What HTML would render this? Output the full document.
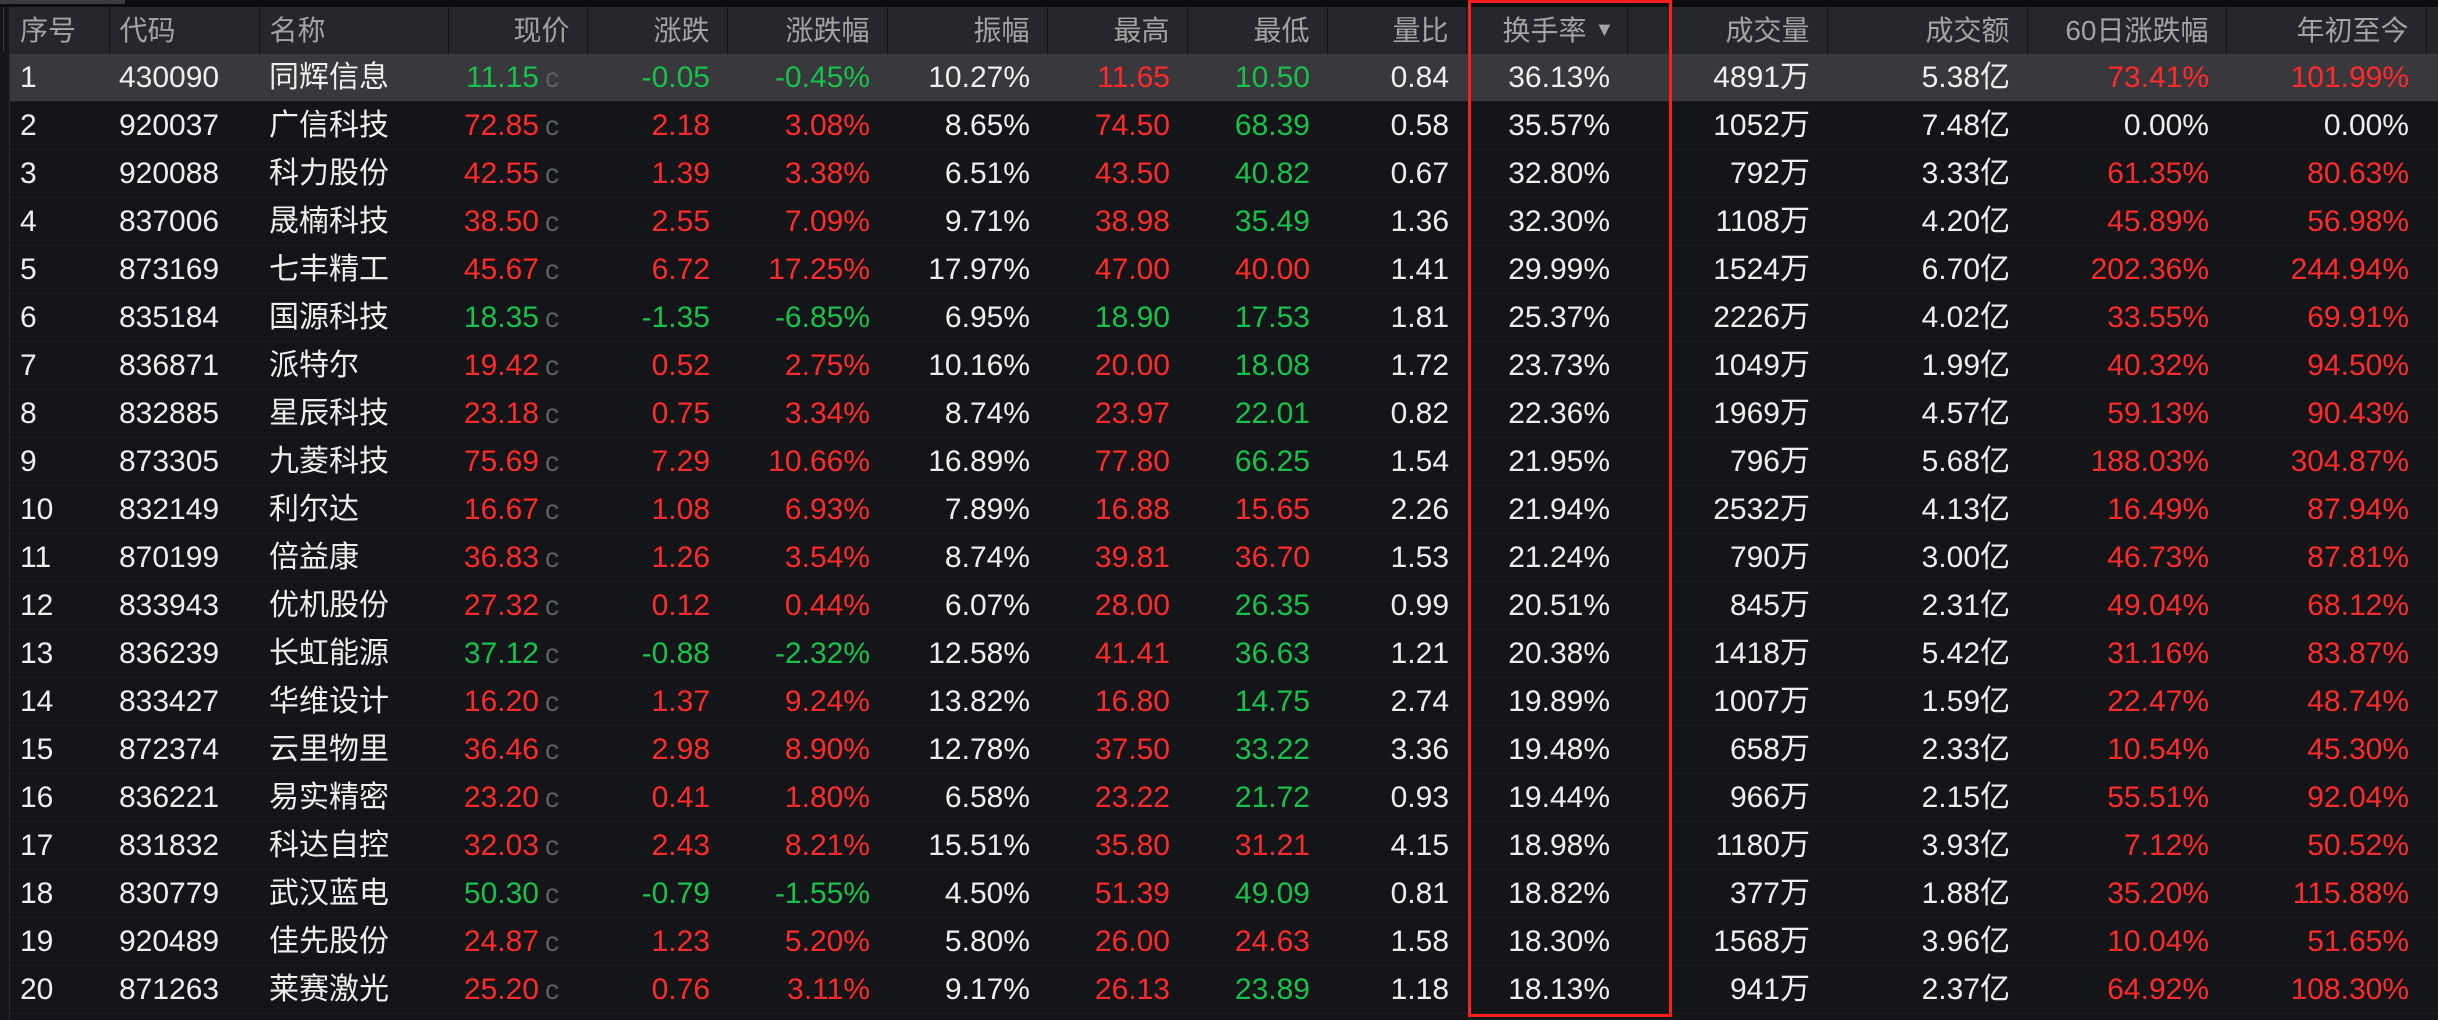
<!DOCTYPE html>
<html><head><meta charset="utf-8">
<style>
html,body{margin:0;padding:0;background:#131519;width:2438px;height:1020px;overflow:hidden;font-family:"Liberation Sans","Noto Sans CJK SC",sans-serif;}
.top{position:absolute;left:0;top:0;width:2438px;height:7px;background:#0c0d10;}
.top2{position:absolute;left:0;top:0;width:125px;height:4px;background:#3a3b40;}
.lstrip{position:absolute;left:0;top:7px;width:10px;height:1013px;background:#15161a;border-right:1px solid #2a2b30;box-sizing:border-box}
.lstrip2{position:absolute;left:3px;top:7px;width:1px;height:45px;background:#3a3b40}
table{position:absolute;left:10px;top:7px;border-collapse:collapse;table-layout:fixed;width:2428px;}
th{height:47px;line-height:30px;background:#26272c;color:#a3a3a3;font-weight:normal;font-size:28px;text-align:right;padding:0 17px 0 0;border-right:1.5px solid #121316;white-space:nowrap;overflow:hidden}
td{height:47px;line-height:30px;border-bottom:1px solid #1c1e23;font-size:30px;color:#eeeeee;text-align:right;padding:0 17px 0 0;white-space:nowrap;overflow:hidden;vertical-align:middle}
th.l,td.l{text-align:left;padding:0 0 0 10px}
tr.hl td{background:#38383d}
.r{color:#ff2a2a}.g{color:#18c24a}
.c{color:#5e5e5e;font-size:28px;margin-left:6px}
td.p{padding-right:28px}
.arr{font-size:20px;vertical-align:4px;margin-left:8px;color:#a3a3a3}
.box{position:absolute;left:1468px;top:0;width:204px;height:1017px;border:3px solid #ff1e1e;box-sizing:border-box}
</style></head><body>
<div class="top"></div><div class="top2"></div><div class="lstrip"></div><div class="lstrip2"></div>
<table>
<colgroup><col style="width:99px"><col style="width:150px"><col style="width:189px"><col style="width:139px"><col style="width:140px"><col style="width:160px"><col style="width:160px"><col style="width:140px"><col style="width:140px"><col style="width:139px"><col style="width:161px"><col style="width:200px"><col style="width:200px"><col style="width:199px"><col style="width:200px"><col style="width:12px"></colgroup>
<tr><th class="l">序号</th><th class="l">代码</th><th class="l">名称</th><th>现价</th><th>涨跌</th><th>涨跌幅</th><th>振幅</th><th>最高</th><th>最低</th><th>量比</th><th style="text-align:left;padding-left:36px">换手率<span class="arr">▼</span></th><th>成交量</th><th>成交额</th><th>60日涨跌幅</th><th>年初至今</th><th style="border:none"></th></tr>
<tr class="hl"><td class="l">1</td><td class="l">430090</td><td class="l">同辉信息</td><td class="p"><span class="g">11.15</span><span class="c">c</span></td><td class="g">-0.05</td><td class="g">-0.45%</td><td>10.27%</td><td class="r">11.65</td><td class="g">10.50</td><td>0.84</td><td>36.13%</td><td>4891万</td><td>5.38亿</td><td class="r">73.41%</td><td class="r">101.99%</td><td></td></tr>
<tr><td class="l">2</td><td class="l">920037</td><td class="l">广信科技</td><td class="p"><span class="r">72.85</span><span class="c">c</span></td><td class="r">2.18</td><td class="r">3.08%</td><td>8.65%</td><td class="r">74.50</td><td class="g">68.39</td><td>0.58</td><td>35.57%</td><td>1052万</td><td>7.48亿</td><td>0.00%</td><td>0.00%</td><td></td></tr>
<tr><td class="l">3</td><td class="l">920088</td><td class="l">科力股份</td><td class="p"><span class="r">42.55</span><span class="c">c</span></td><td class="r">1.39</td><td class="r">3.38%</td><td>6.51%</td><td class="r">43.50</td><td class="g">40.82</td><td>0.67</td><td>32.80%</td><td>792万</td><td>3.33亿</td><td class="r">61.35%</td><td class="r">80.63%</td><td></td></tr>
<tr><td class="l">4</td><td class="l">837006</td><td class="l">晟楠科技</td><td class="p"><span class="r">38.50</span><span class="c">c</span></td><td class="r">2.55</td><td class="r">7.09%</td><td>9.71%</td><td class="r">38.98</td><td class="g">35.49</td><td>1.36</td><td>32.30%</td><td>1108万</td><td>4.20亿</td><td class="r">45.89%</td><td class="r">56.98%</td><td></td></tr>
<tr><td class="l">5</td><td class="l">873169</td><td class="l">七丰精工</td><td class="p"><span class="r">45.67</span><span class="c">c</span></td><td class="r">6.72</td><td class="r">17.25%</td><td>17.97%</td><td class="r">47.00</td><td class="r">40.00</td><td>1.41</td><td>29.99%</td><td>1524万</td><td>6.70亿</td><td class="r">202.36%</td><td class="r">244.94%</td><td></td></tr>
<tr><td class="l">6</td><td class="l">835184</td><td class="l">国源科技</td><td class="p"><span class="g">18.35</span><span class="c">c</span></td><td class="g">-1.35</td><td class="g">-6.85%</td><td>6.95%</td><td class="g">18.90</td><td class="g">17.53</td><td>1.81</td><td>25.37%</td><td>2226万</td><td>4.02亿</td><td class="r">33.55%</td><td class="r">69.91%</td><td></td></tr>
<tr><td class="l">7</td><td class="l">836871</td><td class="l">派特尔</td><td class="p"><span class="r">19.42</span><span class="c">c</span></td><td class="r">0.52</td><td class="r">2.75%</td><td>10.16%</td><td class="r">20.00</td><td class="g">18.08</td><td>1.72</td><td>23.73%</td><td>1049万</td><td>1.99亿</td><td class="r">40.32%</td><td class="r">94.50%</td><td></td></tr>
<tr><td class="l">8</td><td class="l">832885</td><td class="l">星辰科技</td><td class="p"><span class="r">23.18</span><span class="c">c</span></td><td class="r">0.75</td><td class="r">3.34%</td><td>8.74%</td><td class="r">23.97</td><td class="g">22.01</td><td>0.82</td><td>22.36%</td><td>1969万</td><td>4.57亿</td><td class="r">59.13%</td><td class="r">90.43%</td><td></td></tr>
<tr><td class="l">9</td><td class="l">873305</td><td class="l">九菱科技</td><td class="p"><span class="r">75.69</span><span class="c">c</span></td><td class="r">7.29</td><td class="r">10.66%</td><td>16.89%</td><td class="r">77.80</td><td class="g">66.25</td><td>1.54</td><td>21.95%</td><td>796万</td><td>5.68亿</td><td class="r">188.03%</td><td class="r">304.87%</td><td></td></tr>
<tr><td class="l">10</td><td class="l">832149</td><td class="l">利尔达</td><td class="p"><span class="r">16.67</span><span class="c">c</span></td><td class="r">1.08</td><td class="r">6.93%</td><td>7.89%</td><td class="r">16.88</td><td class="r">15.65</td><td>2.26</td><td>21.94%</td><td>2532万</td><td>4.13亿</td><td class="r">16.49%</td><td class="r">87.94%</td><td></td></tr>
<tr><td class="l">11</td><td class="l">870199</td><td class="l">倍益康</td><td class="p"><span class="r">36.83</span><span class="c">c</span></td><td class="r">1.26</td><td class="r">3.54%</td><td>8.74%</td><td class="r">39.81</td><td class="r">36.70</td><td>1.53</td><td>21.24%</td><td>790万</td><td>3.00亿</td><td class="r">46.73%</td><td class="r">87.81%</td><td></td></tr>
<tr><td class="l">12</td><td class="l">833943</td><td class="l">优机股份</td><td class="p"><span class="r">27.32</span><span class="c">c</span></td><td class="r">0.12</td><td class="r">0.44%</td><td>6.07%</td><td class="r">28.00</td><td class="g">26.35</td><td>0.99</td><td>20.51%</td><td>845万</td><td>2.31亿</td><td class="r">49.04%</td><td class="r">68.12%</td><td></td></tr>
<tr><td class="l">13</td><td class="l">836239</td><td class="l">长虹能源</td><td class="p"><span class="g">37.12</span><span class="c">c</span></td><td class="g">-0.88</td><td class="g">-2.32%</td><td>12.58%</td><td class="r">41.41</td><td class="g">36.63</td><td>1.21</td><td>20.38%</td><td>1418万</td><td>5.42亿</td><td class="r">31.16%</td><td class="r">83.87%</td><td></td></tr>
<tr><td class="l">14</td><td class="l">833427</td><td class="l">华维设计</td><td class="p"><span class="r">16.20</span><span class="c">c</span></td><td class="r">1.37</td><td class="r">9.24%</td><td>13.82%</td><td class="r">16.80</td><td class="g">14.75</td><td>2.74</td><td>19.89%</td><td>1007万</td><td>1.59亿</td><td class="r">22.47%</td><td class="r">48.74%</td><td></td></tr>
<tr><td class="l">15</td><td class="l">872374</td><td class="l">云里物里</td><td class="p"><span class="r">36.46</span><span class="c">c</span></td><td class="r">2.98</td><td class="r">8.90%</td><td>12.78%</td><td class="r">37.50</td><td class="g">33.22</td><td>3.36</td><td>19.48%</td><td>658万</td><td>2.33亿</td><td class="r">10.54%</td><td class="r">45.30%</td><td></td></tr>
<tr><td class="l">16</td><td class="l">836221</td><td class="l">易实精密</td><td class="p"><span class="r">23.20</span><span class="c">c</span></td><td class="r">0.41</td><td class="r">1.80%</td><td>6.58%</td><td class="r">23.22</td><td class="g">21.72</td><td>0.93</td><td>19.44%</td><td>966万</td><td>2.15亿</td><td class="r">55.51%</td><td class="r">92.04%</td><td></td></tr>
<tr><td class="l">17</td><td class="l">831832</td><td class="l">科达自控</td><td class="p"><span class="r">32.03</span><span class="c">c</span></td><td class="r">2.43</td><td class="r">8.21%</td><td>15.51%</td><td class="r">35.80</td><td class="r">31.21</td><td>4.15</td><td>18.98%</td><td>1180万</td><td>3.93亿</td><td class="r">7.12%</td><td class="r">50.52%</td><td></td></tr>
<tr><td class="l">18</td><td class="l">830779</td><td class="l">武汉蓝电</td><td class="p"><span class="g">50.30</span><span class="c">c</span></td><td class="g">-0.79</td><td class="g">-1.55%</td><td>4.50%</td><td class="r">51.39</td><td class="g">49.09</td><td>0.81</td><td>18.82%</td><td>377万</td><td>1.88亿</td><td class="r">35.20%</td><td class="r">115.88%</td><td></td></tr>
<tr><td class="l">19</td><td class="l">920489</td><td class="l">佳先股份</td><td class="p"><span class="r">24.87</span><span class="c">c</span></td><td class="r">1.23</td><td class="r">5.20%</td><td>5.80%</td><td class="r">26.00</td><td class="r">24.63</td><td>1.58</td><td>18.30%</td><td>1568万</td><td>3.96亿</td><td class="r">10.04%</td><td class="r">51.65%</td><td></td></tr>
<tr><td class="l">20</td><td class="l">871263</td><td class="l">莱赛激光</td><td class="p"><span class="r">25.20</span><span class="c">c</span></td><td class="r">0.76</td><td class="r">3.11%</td><td>9.17%</td><td class="r">26.13</td><td class="g">23.89</td><td>1.18</td><td>18.13%</td><td>941万</td><td>2.37亿</td><td class="r">64.92%</td><td class="r">108.30%</td><td></td></tr>
</table>
<div class="box"></div>
</body></html>
